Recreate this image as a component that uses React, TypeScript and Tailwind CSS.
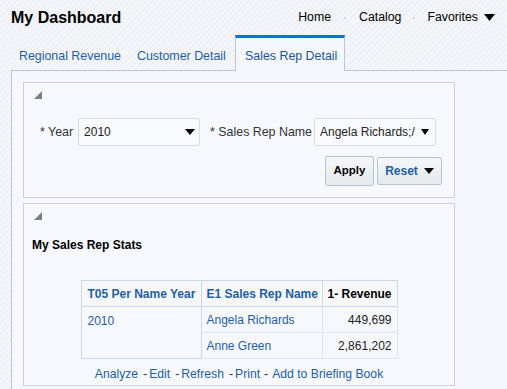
import React from "react";

const Tri = () => (
  <svg width="8" height="8" viewBox="0 0 8 8" className="block">
    <polygon points="8,0 8,8 0,8" fill="#7b7f84" />
  </svg>
);

const Down = ({ w = 10, h = 6 }: { w?: number; h?: number }) => (
  <svg width={w} height={h} viewBox="0 0 10 6" className="block" preserveAspectRatio="none">
    <polygon points="0,0 10,0 5,6" fill="#000" />
  </svg>
);

export default function App() {
  return (
    <div className="w-[507px] h-[389px] overflow-hidden bg-[#f1f3f8] bg-[repeating-linear-gradient(135deg,#eceef4_0px,#eceef4_1px,#f4f5f9_1px,#f4f5f9_4px)] font-['Liberation_Sans',Arial,sans-serif] text-[12px] text-[#333]">
      {/* header */}
      <div className="h-[35px] flex items-center pl-[11px] pr-[12px]">
        <div className="text-[16px] font-bold text-black leading-none">My Dashboard</div>
        <div className="ml-auto flex items-center text-[12.3px] text-black">
          <span>Home</span>
          <span className="mx-[13px] w-[2px] h-[2px] bg-[#d3d6dc]"></span>
          <span>Catalog</span>
          <span className="mx-[12px] w-[2px] h-[2px] bg-[#d3d6dc]"></span>
          <span>Favorites</span>
          <span className="ml-[6px]"><Down w={11} h={7} /></span>
        </div>
      </div>
      {/* tabs */}
      <div className="ml-[11px] h-[36px] flex border-b border-[#b9c5d6] text-[12.4px] text-[#1f5ea6]">
        <div className="w-[117px] pl-[8px] flex items-center pt-[7px] whitespace-nowrap">Regional Revenue</div>
        <div className="w-[107px] pl-[9px] flex items-center pt-[7px] whitespace-nowrap">Customer Detail</div>
        <div className="w-[110px] pl-[9px] pt-[4px] h-[36px] flex items-center border-t-[3px] border-t-[#0a73d0] border-x border-x-[#b9c5d6] bg-[#f5f7fc] text-[#1a5596] relative z-10 whitespace-nowrap">
          Sales Rep Detail
        </div>
      </div>
      {/* content */}
      <div className="ml-[11px] -mt-px border-l border-t border-[#b9c5d6] bg-[#f5f7fc] h-[400px] pl-[11px] pt-[11px]">
        {/* prompts panel */}
        <div className="w-[432px] h-[116px] border border-[#c8d1dd] bg-[#f6f8fd] flex flex-col">
          <div className="pl-[10px] pt-[8px]"><Tri /></div>
          <div className="mt-[19px] flex items-center pl-[16px] text-[12.4px]">
            <span className="mr-[5px] whitespace-nowrap">* Year</span>
            <div className="w-[122px] h-[28px] border border-[#d6dae2] rounded-[2px] bg-[#fafbfe] flex items-center pl-[5px] pr-[4px] text-[12px] text-[#222]">
              <span>2010</span>
              <span className="ml-auto"><Down /></span>
            </div>
            <span className="ml-[10px] mr-[2px] whitespace-nowrap">* Sales Rep Name</span>
            <div className="w-[122px] h-[28px] border border-[#d6dae2] rounded-[2px] bg-[#fafbfe] flex items-center pl-[5px] pr-[6px] text-[12px] text-[#222]">
              <span className="w-[97px] overflow-hidden whitespace-nowrap">Angela Richards;/</span>
              <span className="ml-auto"><Down w={8} h={6} /></span>
            </div>
          </div>
          <div className="mt-[10px] flex justify-end items-center pr-[12px] gap-[3px]">
            <div className="w-[49px] h-[30px] border border-[#b9c3cd] rounded-[2px] bg-[linear-gradient(#f4f6f7,#e6eaec)] flex items-center justify-center font-bold text-[11.5px] text-black">Apply</div>
            <div className="w-[65px] h-[28px] border border-[#b9c3cd] rounded-[2px] bg-[linear-gradient(#f4f6f7,#e6eaec)] flex items-center justify-center font-bold text-[12px] text-[#1f5ea6] gap-[6px]">
              <span>Reset</span>
              <Down />
            </div>
          </div>
        </div>
        {/* report panel */}
        <div className="mt-[5px] w-[432px] h-[183px] border border-[#c8d1dd] bg-[#f6f8fd] flex flex-col">
          <div className="pl-[10px] pt-[8px]"><Tri /></div>
          <div className="pl-[8px] mt-[18px] font-bold text-black leading-[14px]">My Sales Rep Stats</div>
          <div className="mt-[28px] flex justify-center">
            <table className="border-collapse border border-[#c9dae6] text-[12px]">
              <thead>
                <tr className="h-[26px] bg-[#f6f7f9]">
                  <th className="w-[120px] border border-[#c9dae6] text-left font-bold text-[#1f5ea6] pl-[6px]">T05 Per Name Year</th>
                  <th className="w-[121px] border border-[#c9dae6] text-left font-bold text-[#1f5ea6] pl-[5px]">E1 Sales Rep Name</th>
                  <th className="w-[75px] border border-[#c9dae6] text-left font-bold text-black pl-[5px]">1- Revenue</th>
                </tr>
              </thead>
              <tbody>
                <tr className="h-[26px]">
                  <td rowSpan={2} className="border border-[#c9dae6] align-top pt-[5px] pl-[6px] text-[#1f5ea6]">2010</td>
                  <td className="border border-[#dde7ee] pl-[5px] text-[#1f5ea6]">Angela Richards</td>
                  <td className="border border-[#dde7ee] text-right pr-[5px] text-[#222]">449,699</td>
                </tr>
                <tr className="h-[26px]">
                  <td className="border border-[#dde7ee] pl-[5px] text-[#1f5ea6]">Anne Green</td>
                  <td className="border border-[#dde7ee] text-right pr-[5px] text-[#222]">2,861,202</td>
                </tr>
              </tbody>
            </table>
          </div>
          <div className="mt-[6px] flex justify-center text-[12.2px] text-[#1f5ea6]">
            <span>Analyze</span>
            <span className="text-[#333] ml-[5px] mr-[2px]">-</span>
            <span>Edit</span>
            <span className="text-[#333] ml-[5px] mr-[2px]">-</span>
            <span>Refresh</span>
            <span className="text-[#333] ml-[5px] mr-[2px]">-</span>
            <span>Print</span>
            <span className="text-[#333] ml-[4px] mr-[4px]">-</span>
            <span>Add to Briefing Book</span>
          </div>
        </div>
      </div>
    </div>
  );
}
